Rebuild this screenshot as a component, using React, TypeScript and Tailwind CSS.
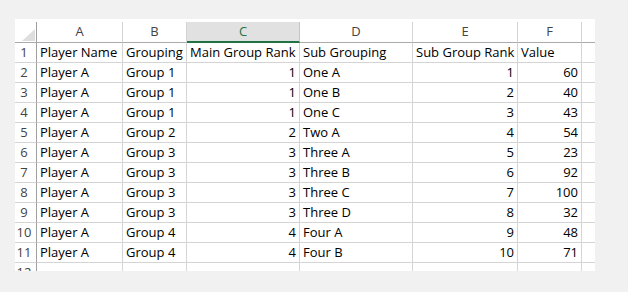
import type { ReactNode } from 'react';

type Row = [string, string, number, string, number, number];

const rows: Row[] = [
  ['Player A', 'Group 1', 1, 'One A', 1, 60],
  ['Player A', 'Group 1', 1, 'One B', 2, 40],
  ['Player A', 'Group 1', 1, 'One C', 3, 43],
  ['Player A', 'Group 2', 2, 'Two A', 4, 54],
  ['Player A', 'Group 3', 3, 'Three A', 5, 23],
  ['Player A', 'Group 3', 3, 'Three B', 6, 92],
  ['Player A', 'Group 3', 3, 'Three C', 7, 100],
  ['Player A', 'Group 3', 3, 'Three D', 8, 32],
  ['Player A', 'Group 4', 4, 'Four A', 9, 48],
  ['Player A', 'Group 4', 4, 'Four B', 10, 71],
];

const widths = ['w-[86px]', 'w-[64px]', 'w-[113px]', 'w-[113px]', 'w-[105px]', 'w-[64px]'];

function Cell({ w, right, children }: { w: string; right?: boolean; children?: ReactNode }) {
  return (
    <div
      className={`${w} shrink-0 h-full border-r border-b border-[#d4d4d4] px-[3px] whitespace-nowrap overflow-hidden ${
        right ? 'text-right' : 'text-left'
      }`}
    >
      {children}
    </div>
  );
}

function RowNum({ n }: { n: number }) {
  return (
    <div className="w-[22px] shrink-0 h-full border-r border-r-[#9f9f9f] border-b border-b-[#d4d4d4] pr-[3px] text-center text-[#444]">
      {n}
    </div>
  );
}

export default function App() {
  const letters = ['A', 'B', 'C', 'D', 'E', 'F'];
  return (
    <div
      className="w-[628px] h-[292px] bg-[#f1f1f1] pt-[19px] pl-[15px] text-[13px] leading-[19px] text-black"
      style={{ fontFamily: '"Open Sans", "Liberation Sans", sans-serif' }}
    >
      <div className="relative w-[580px] h-[252px] bg-white overflow-hidden pt-[3px]">
        <div className="absolute left-[21px] top-[3px] w-px h-[3px] bg-black" />

        {/* column headers */}
        <div className="flex h-[21px]">
          <div className="relative w-[22px] shrink-0 h-full border-r border-r-[#9f9f9f] border-b border-b-[#ababab]">
            <svg className="absolute right-[1px] bottom-[1px]" width="13" height="12" viewBox="0 0 13 12">
              <polygon points="13,0 13,12 0,12" fill="#dedede" />
            </svg>
          </div>
          {letters.map((l, i) =>
            l === 'C' ? (
              <div
                key={l}
                className={`${widths[i]} shrink-0 h-full bg-[#e1e1e1] border-r border-r-[#c6c6c6] border-b-2 border-b-[#217346] text-center text-[#217346]`}
              >
                {l}
              </div>
            ) : (
              <div
                key={l}
                className={`${widths[i]} shrink-0 h-full border-r border-r-[#d4d4d4] border-b border-b-[#ababab] text-center text-[#444]`}
              >
                {l}
              </div>
            )
          )}
          <div className="flex-1 h-full border-b border-b-[#ababab]" />
        </div>

        {/* header row */}
        <div className="flex h-[20px]">
          <RowNum n={1} />
          <Cell w={widths[0]}>Player Name</Cell>
          <Cell w={widths[1]}>Grouping</Cell>
          <Cell w={widths[2]}>Main Group Rank</Cell>
          <Cell w={widths[3]}>Sub Grouping</Cell>
          <Cell w={widths[4]}>Sub Group Rank</Cell>
          <Cell w={widths[5]}>Value</Cell>
          <div className="flex-1 h-full border-b border-[#d4d4d4]" />
        </div>

        {rows.map((r, i) => (
          <div key={i} className="flex h-[20px]">
            <RowNum n={i + 2} />
            <Cell w={widths[0]}>{r[0]}</Cell>
            <Cell w={widths[1]}>{r[1]}</Cell>
            <Cell w={widths[2]} right>
              {r[2]}
            </Cell>
            <Cell w={widths[3]}>{r[3]}</Cell>
            <Cell w={widths[4]} right>
              {r[4]}
            </Cell>
            <Cell w={widths[5]} right>
              {r[5]}
            </Cell>
            <div className="flex-1 h-full border-b border-[#d4d4d4]" />
          </div>
        ))}

        <div className="flex h-[20px]">
          <RowNum n={12} />
          {widths.map((w, i) => (
            <Cell key={i} w={w} />
          ))}
        </div>
      </div>
    </div>
  );
}
